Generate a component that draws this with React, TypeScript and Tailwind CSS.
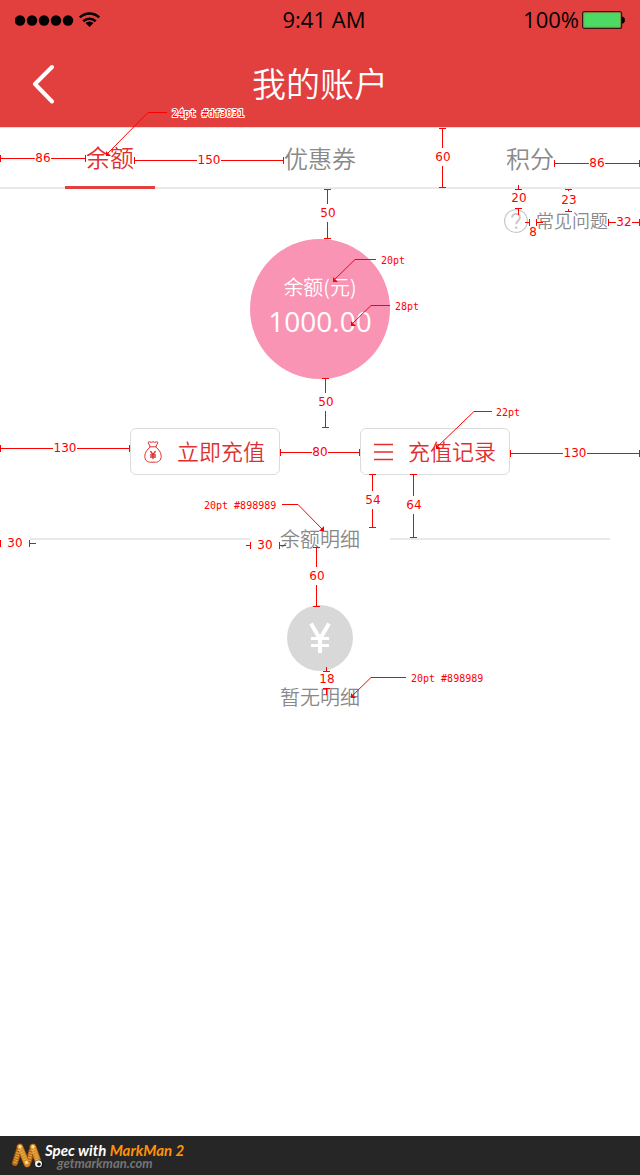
import { Fragment } from "react";

type Span = { at: number; from: number; to: number; label: string; mid: number; out?: boolean; labelAt?: number };
type Leader = { points: [number, number][]; label: string; x: number; y: number; mirrored?: boolean };

const horizontal: Span[] = [
  { at: 158, from: 0, to: 85, label: "86", mid: 43 },
  { at: 160, from: 134, to: 283, label: "150", mid: 209 },
  { at: 163, from: 554, to: 639, label: "86", mid: 597 },
  { at: 222, from: 608, to: 639, label: "32", mid: 624 },
  { at: 222, from: 529, to: 536, label: "8", mid: 533, out: true, labelAt: 232 },
  { at: 448, from: 0, to: 129, label: "130", mid: 65 },
  { at: 452, from: 280, to: 359, label: "80", mid: 320 },
  { at: 453, from: 510, to: 639, label: "130", mid: 575 },
  { at: 543, from: 0, to: 29, label: "30", mid: 15, out: true },
  { at: 545, from: 250, to: 279, label: "30", mid: 265, out: true },
];

const vertical: Span[] = [
  { at: 442, from: 128, to: 187, label: "60", mid: 157 },
  { at: 327, from: 189, to: 238, label: "50", mid: 213 },
  { at: 518, from: 189, to: 208, label: "20", mid: 198, out: true },
  { at: 568, from: 189, to: 211, label: "23", mid: 200 },
  { at: 325, from: 378, to: 427, label: "50", mid: 402 },
  { at: 372, from: 474, to: 527, label: "54", mid: 500 },
  { at: 413, from: 474, to: 537, label: "64", mid: 505 },
  { at: 316, from: 547, to: 606, label: "60", mid: 576 },
  { at: 326, from: 671, to: 688, label: "18", mid: 679, out: true },
];

const leaders: Leader[] = [
  { points: [[167, 112], [148, 112], [106, 155]], label: "24pt #df3031", x: 172, y: 117 },
  { points: [[376, 259], [355, 259], [333, 281]], label: "20pt", x: 381, y: 264 },
  { points: [[390, 305], [371, 305], [351, 325]], label: "28pt", x: 395, y: 310 },
  { points: [[492, 411], [474, 411], [436, 448]], label: "22pt", x: 496, y: 416 },
  { points: [[282, 504], [298, 504], [323, 530]], label: "20pt #898989", x: 204, y: 509, mirrored: true },
  { points: [[406, 677], [371, 677], [351, 697]], label: "20pt #898989", x: 411, y: 682 },
];

function spanPath(s: Span, isVertical: boolean) {
  const half = isVertical ? 9 : s.label.length * 4;
  const at = s.at + 0.5;
  const a = s.from + 0.5;
  const b = s.to + 0.5;
  const parts: [number, number][] = s.out
    ? [[a - 5, a], [b, b + 6]]
    : [[a, Math.max(a, s.mid - half)], [Math.min(b, s.mid + half), b]];
  const lines = parts.map(([p, q]) => (isVertical ? `M${at} ${p}V${q}` : `M${p} ${at}H${q}`));
  const ticks = [a, b].map((p) => (isVertical ? `M${at - 3.5} ${p}h7` : `M${p} ${at - 3.5}v7`));
  return [...lines, ...ticks].join("");
}

function Annotations() {
  return (
    <div className="pointer-events-none absolute inset-0 flex justify-center overflow-hidden font-normal">
      <svg width="640" height="720" className="shrink-0" fill="none" stroke="#ff0000" strokeWidth="1">
        <g shapeRendering="crispEdges">
          {horizontal.map((s, i) => <path key={i} d={spanPath(s, false)} />)}
          {vertical.map((s, i) => <path key={i} d={spanPath(s, true)} />)}
        </g>
        {leaders.map((l, i) => {
          const [[x0, y0], [x1], [x2, y2]] = l.points;
          return (
            <Fragment key={i}>
              <path d={`M${x0} ${y0 + 0.5}H${x1}L${x2} ${y2}`} />
              <path
                d={l.mirrored ? `M${x2 + 1} ${y2 - 4}v5h-5z` : `M${x2} ${y2 - 4}v5h5z`}
                fill="#ff0000"
                stroke="none"
              />
            </Fragment>
          );
        })}
        <g className="font-['DejaVu_Sans',sans-serif] text-[12px]" fill="#ff0000" stroke="#ffffff" strokeWidth="2" paintOrder="stroke" textAnchor="middle">
          {horizontal.map((s, i) => <text key={i} x={s.mid} y={(s.labelAt ?? s.at) + 4}>{s.label}</text>)}
          {vertical.map((s, i) => <text key={i} x={s.at + 1} y={s.mid + 4}>{s.label}</text>)}
        </g>
        <g className="font-['DejaVu_Sans_Mono',monospace] text-[10px]" fill="#ff0000" stroke="#ffffff" strokeWidth="2" paintOrder="stroke">
          {leaders.map((l, i) => <text key={i} x={l.x} y={l.y}>{l.label}</text>)}
        </g>
      </svg>
    </div>
  );
}

function StatusBar() {
  return (
    <div className="grid h-10 grid-cols-3 items-center px-[15px] font-['Open_Sans',sans-serif] text-[22px] font-normal text-black">
      <svg width="86" height="20" viewBox="0 0 86 20" aria-label="信号">
        {[5, 17, 29, 41, 53].map((x) => <circle key={x} cx={x} cy="10.5" r="5.2" />)}
        <g fill="none" stroke="#000" strokeWidth="2.6">
          <path d="M64.8 7.4a14 14 0 0 1 19.4 0" />
          <path d="M68.3 11.2a9 9 0 0 1 12.4 0" />
        </g>
        <path d="M70.5 13.1a5.6 5.6 0 0 1 8 0L74.5 17z" />
      </svg>
      <span className="pb-px pl-2 text-center whitespace-nowrap">9:41 AM</span>
      <span className="flex items-center justify-end gap-[3px] pb-px">
        100%
        <svg width="43" height="20" viewBox="0 0 43 20" aria-label="电量">
          <rect x="0.6" y="1.6" width="39" height="16.8" rx="2" fill="#4cd964" stroke="#3a1010" strokeWidth="1.2" />
          <rect x="1.7" y="2.7" width="36.8" height="14.6" rx="1" fill="none" stroke="#8b7a3b" strokeWidth="0.8" />
          <path d="M40 6.8h1.2l1.6 1.8v3l-1.6 1.8H40z" />
        </svg>
      </span>
    </div>
  );
}

function MoneyBag() {
  return (
    <svg width="18" height="22" viewBox="0 0 18 22" fill="none" stroke="#df3031" strokeWidth="1" strokeLinejoin="round" strokeLinecap="round" aria-hidden="true">
      <path d="M6 5.2L4.3 2.2Q3.8.8 5.2.8L7.200 1.300 9 .8l1.800.5 2-.5Q14.200.8 13.700 2.200L12 5.200" />
      <path d="M5.600 5.800h6.800M6 6.200C3 8.500.800 11.700.800 15.300c0 4.200 2.800 5.900 5.700 5.900h5c2.900 0 5.700-1.700 5.700-5.900 0-3.600-2.200-6.800-5.200-9.100" />
      <path d="M6.700 10.500L9 13.700l2.300-3.200M9 13.700V17.500M6.500 14h5M6.500 16h5" strokeWidth="1.300" />
    </svg>
  );
}

function MarkManLogo() {
  return (
    <svg width="33" height="29" viewBox="0 0 33 29" fill="none" strokeLinecap="round" strokeLinejoin="round" aria-hidden="true">
      <path d="M4 22L9 6M17 22l5-16" stroke="#7a400a" strokeWidth="6.500" />
      <path d="M4 22L9 6M17 22l5-16" stroke="#b96c16" strokeWidth="5.300" />
      <path d="M9 6l7 17M22 6l6 17" stroke="#7a400a" strokeWidth="7" />
      <path d="M9 6l7 17M22 6l6 17" stroke="#d48a26" strokeWidth="5.800" />
      <path d="M9 6l7 17M22 6l6 17M4 22L9 6M17 22l5-16" stroke="#eeb052" strokeWidth="3.500" strokeDasharray="1 1.500" strokeLinecap="butt" />
      <circle cx="9" cy="5.500" r="1.600" fill="#fbe39a" />
      <circle cx="22" cy="5.500" r="1.600" fill="#fbe39a" />
      <circle cx="15.500" cy="21.500" r="1.500" fill="#fbe39a" />
      <circle cx="28" cy="23" r="4.300" fill="#111" />
      <circle cx="27.500" cy="22.800" r="3.500" fill="#f5f5f5" />
      <circle cx="28" cy="23.300" r="1.700" fill="#111" />
    </svg>
  );
}

const tabs = ["余额", "优惠券", "积分"];
const actionClass =
  "flex h-[47px] w-[150px] items-center gap-[15px] rounded-md border border-[#dcdcdc] bg-white pl-[13px] text-[22px] leading-6 whitespace-nowrap text-[#df3031]";

export default function App() {
  return (
    <div className="relative flex min-h-screen flex-col bg-white font-['Noto_Sans_CJK_SC',sans-serif] font-[350] text-[#898989]">
      <header className="border-b border-[#dedede] bg-[#e23f3f]">
        <StatusBar />
        <div className="grid h-[87px] grid-cols-[60px_1fr_60px] items-center">
          <button type="button" aria-label="返回" className="pl-8">
            <svg width="23" height="40" viewBox="0 0 23 40" fill="none" stroke="#fff" strokeWidth="4" strokeLinecap="round" strokeLinejoin="round">
              <path d="M20 3L3 20l17 17.500" />
            </svg>
          </button>
          <h1 className="pb-0.5 text-center text-[34px] leading-10 font-[350] text-white">我的账户</h1>
        </div>
      </header>

      <nav className="flex h-[61px] justify-between border-b-2 border-[#e9e9e9] px-[65px]">
        {tabs.map((tab, i) => (
          <button
            key={tab}
            type="button"
            className={
              i === 0
                ? "-mb-0.5 w-[90px] border-b-3 border-[#e23f3f] text-[24px] leading-6 text-[#df3031]"
                : "w-[90px] text-[24px] leading-6"
            }
          >
            {tab}
          </button>
        ))}
      </nav>

      <main className="flex flex-col items-center">
        <a href="#faq" className="mt-5 mr-8 flex h-6 items-center gap-2 self-end text-[18px] leading-6">
          <svg width="24" height="24" viewBox="0 0 24 24" fill="none" stroke="#c9c9c9" aria-hidden="true">
            <circle cx="12" cy="12" r="11.400" strokeWidth="1.200" />
            <path d="M8 8.600C8.200 6.200 9.800 5 12 5s3.900 1.300 3.900 3.500c0 3.200-3.700 3.400-3.700 6.700" strokeWidth="2" />
            <path d="M12.200 17.500v2.300" strokeWidth="2.300" />
          </svg>
          <span className="pb-0.5">常见问题</span>
        </a>

        <section className="mt-1.5 flex size-[140px] flex-col items-center rounded-full bg-[#f994b5] pt-9 text-white">
          <h2 className="text-[20px] leading-6 font-[350]">余额(元)</h2>
          <p className="font-['Open_Sans',sans-serif] text-[28px] leading-11 font-normal">1000.00</p>
        </section>

        <div className="mt-[49px] flex gap-20">
          <button type="button" className={actionClass}>
            <MoneyBag />
            <span className="pb-1">立即充值</span>
          </button>
          <button type="button" className={actionClass}>
            <svg width="19" height="18" viewBox="0 0 19 18" stroke="#df3031" strokeWidth="1.500" aria-hidden="true">
              <path d="M0 1.500h19M0 9h19M0 16.500h19" />
            </svg>
            <span className="pb-1">充值记录</span>
          </button>
        </div>

        <div className="mt-[52px] flex w-full items-center gap-[30px] px-[30px]">
          <span className="h-0.5 flex-1 bg-[#e9e9e9]" />
          <h2 className="text-[20px] leading-6 font-[350]">余额明细</h2>
          <span className="h-0.5 flex-1 bg-[#e9e9e9]" />
        </div>

        <svg width="66" height="66" viewBox="0 0 66 66" className="mt-[54px]" aria-hidden="true">
          <circle cx="33" cy="33" r="33" fill="#d8d8d8" />
          <path d="M24 18.500l9 15.500 9-15.500M33 33v15" fill="none" stroke="#fff" strokeWidth="4" />
          <path d="M24 33.500h18M24 40.500h18" stroke="#fff" strokeWidth="3" />
        </svg>
        <p className="mt-3.5 text-[20px] leading-6">暂无明细</p>
      </main>

      <footer className="mt-auto flex h-[39px] items-center gap-px bg-[#262626] pl-[11px] font-['Lato',sans-serif] font-bold italic">
        <MarkManLogo />
        <div>
          <p className="text-[15px] leading-[14px] text-white">
            Spec with <span className="text-[#ff920a]">MarkMan 2</span>
          </p>
          <p className="pl-3 text-[13px] leading-3 text-[#757575]">getmarkman.com</p>
        </div>
      </footer>

      <Annotations />
    </div>
  );
}
